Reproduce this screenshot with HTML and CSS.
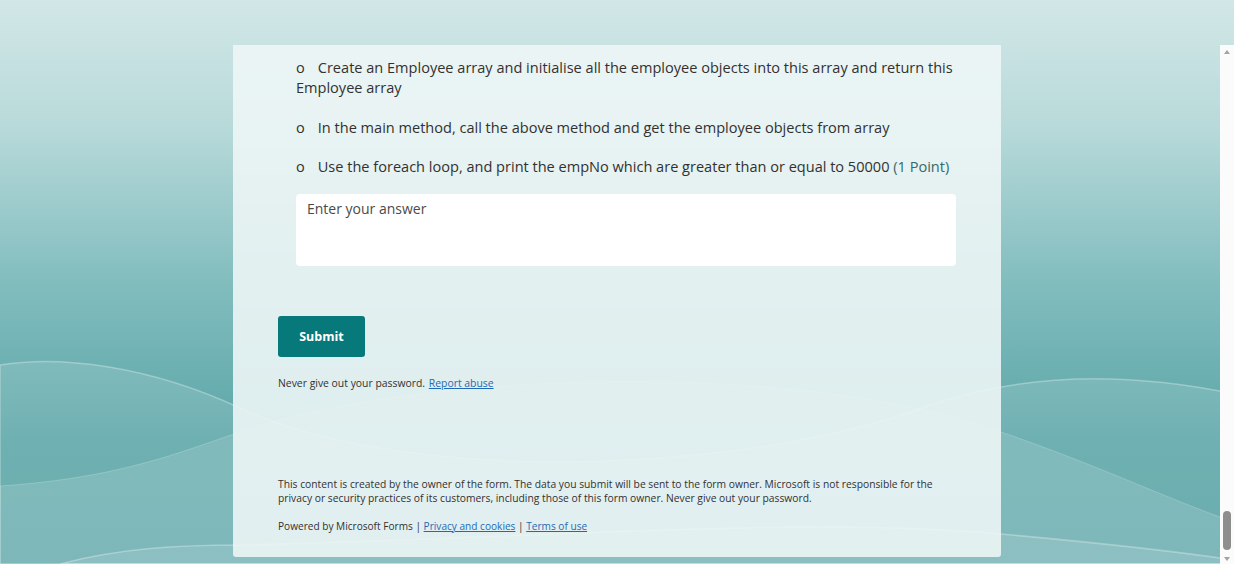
FILE: index.html
```html
<!DOCTYPE html>
<html lang="en">
<head>
<meta charset="utf-8">
<title>Microsoft Forms</title>
<link rel="stylesheet" href="styles.css">
</head>
<body>
<div class="backdrop" aria-hidden="true">
  <svg class="waves" viewBox="0 0 1234 564" preserveAspectRatio="none" xmlns="http://www.w3.org/2000/svg">
    <defs>
      <linearGradient id="sky" x1="0" y1="0" x2="0" y2="1">
        <stop offset="0" stop-color="#d2e7e7"/>
        <stop offset="0.22" stop-color="#b9dada"/>
        <stop offset="0.5" stop-color="#82bdbe"/>
        <stop offset="0.78" stop-color="#5ca6a8"/>
        <stop offset="1" stop-color="#56a2a4"/>
      </linearGradient>
    </defs>
    <rect width="1234" height="564" fill="url(#sky)"/>
    <path d="M0,365 C60,355 150,366 240,408 C420,490 760,470 930,405 C1010,378 1110,368 1234,394 L1234,564 L0,564 Z" fill="#ffffff" fill-opacity="0.12" stroke="#ffffff" stroke-opacity="0.3" stroke-width="1.5"/>
    <path d="M0,486 C120,478 180,452 240,432 C420,370 800,360 1001,432 C1100,466 1170,500 1234,522 L1234,564 L0,564 Z" fill="#ffffff" fill-opacity="0.13" stroke="#ffffff" stroke-opacity="0.2" stroke-width="1"/>
    <path d="M60,564 C120,548 180,545 240,545 C500,540 800,515 1001,534 C1100,543 1180,552 1234,560 L1234,564 Z" fill="#ffffff" fill-opacity="0.12" stroke="#ffffff" stroke-opacity="0.3" stroke-width="1.5"/>
  </svg>
</div>

<main class="page">
  <section class="card">
    <div class="question">
      <p class="item">Create an Employee array and initialise all the employee objects into this array and return this Employee array</p>
      <p class="item">In the main method, call the above method and get the employee objects from array</p>
      <p class="item">Use the foreach loop, and print the empNo which are greater than or equal to 50000 <span class="points">(1 Point)</span></p>
      <div class="answer">Enter your answer</div>
    </div>

    <button class="submit" type="button">Submit</button>

    <p class="note">Never give out your password. <a href="#" class="link">Report abuse</a></p>

    <p class="disclaimer">This content is created by the owner of the form. The data you submit will be sent to the form owner. Microsoft is not responsible for the privacy or security practices of its customers, including those of this form owner. Never give out your password.</p>

    <p class="powered">Powered by Microsoft Forms | <a href="#" class="link">Privacy and cookies</a> | <a href="#" class="link">Terms of use</a></p>
  </section>
</main>

<div class="scrollbar" aria-hidden="true">
  <span class="arrow up"></span>
  <span class="thumb"></span>
  <span class="arrow down"></span>
</div>
</body>
</html>
```

FILE: styles.css
```css
* { box-sizing: border-box; }

html, body {
  margin: 0;
  padding: 0;
  width: 1234px;
  height: 564px;
  overflow: hidden;
}

body {
  position: relative;
  font-family: "Open Sans", "Noto Sans", sans-serif;
  color: #323130;
  background: #9ccbcc;
}

.backdrop {
  position: absolute;
  inset: 0;
  z-index: 0;
}

.waves {
  display: block;
  width: 100%;
  height: 100%;
}

.page {
  position: relative;
  z-index: 1;
  padding-top: 45px;
}

.card {
  width: 768px;
  margin: 0 auto;
  padding: 12px 45px 24px;
  background: rgba(238, 246, 246, 0.89);
  border-radius: 0 0 3px 3px;
}

.question {
  padding-left: 18px;
}

.item {
  margin: 0 0 19.5px;
  font-size: 14.55px;
  line-height: 20px;
  color: #323130;
}

.item::before {
  content: "o";
  margin-right: 13px;
}

.item:nth-of-type(3) {
  margin-bottom: 17.5px;
}

.points {
  color: #35696b;
}

.answer {
  height: 72px;
  padding: 7px 11px;
  background: #ffffff;
  border-radius: 4px;
  font-size: 14px;
  line-height: 16px;
  color: #4a4a4a;
}

.submit {
  display: block;
  margin-top: 50px;
  width: 87px;
  height: 41px;
  border: none;
  border-radius: 3px;
  background: #07797b;
  color: #ffffff;
  font-family: "Open Sans", "Noto Sans", sans-serif;
  font-weight: 700;
  font-size: 12.5px;
  padding: 0;
}

.note {
  margin: 19.5px 0 0;
  font-size: 10.4px;
  line-height: 15px;
  color: #323130;
}

.note .link {
  margin-left: 1px;
}

.link {
  color: #1f6ab6;
  text-decoration: underline;
}

.disclaimer {
  margin: 85.5px 0 0;
  font-size: 10.3px;
  line-height: 14px;
  color: #323130;
}

.powered {
  margin: 14px 0 0;
  font-size: 10.1px;
  line-height: 14px;
  color: #323130;
}

.scrollbar {
  position: absolute;
  top: 45px;
  right: 0;
  bottom: 0;
  width: 14px;
  z-index: 2;
  background: #fbfbfb;
  display: flex;
  flex-direction: column;
  align-items: center;
  padding: 5px 0 3px;
}

.arrow {
  width: 0;
  height: 0;
  border-left: 3.5px solid transparent;
  border-right: 3.5px solid transparent;
}

.arrow.up { border-bottom: 4px solid #a3a3a3; }
.arrow.down { border-top: 4px solid #a3a3a3; }

.thumb {
  margin-top: auto;
  margin-bottom: 7px;
  width: 8px;
  height: 39px;
  border-radius: 4px;
  background: #8e8e8e;
}
```
